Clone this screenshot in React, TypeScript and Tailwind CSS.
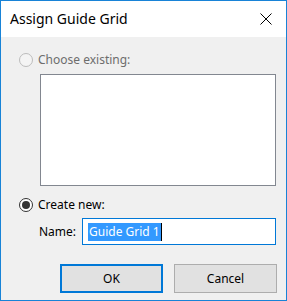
import React from "react";

function Radio({ checked, disabled }: { checked?: boolean; disabled?: boolean }) {
  return (
    <span
      className={`flex h-[14px] w-[14px] shrink-0 items-center justify-center rounded-full border ${
        disabled ? "border-[#bcbcbc] bg-[#f4f4f4]" : "border-[#333333] bg-white"
      }`}
    >
      {checked && <span className="h-[8px] w-[8px] rounded-full bg-[#333333]" />}
    </span>
  );
}

export default function App() {
  return (
    <div
      className="flex h-[301px] w-[287px] flex-col border border-[#1883d7] bg-[#f0f0f0] text-[12px] text-black"
      style={{ fontFamily: '"Noto Sans", "Open Sans", sans-serif' }}
    >
      {/* title bar */}
      <div className="flex h-[36px] shrink-0 items-center justify-between bg-white pl-[9px] pr-[14px]">
        <span className="text-[14px] leading-none text-black">Assign Guide Grid</span>
        <svg width="12" height="12" viewBox="0 0 12 12" className="text-black">
          <path d="M0.5 0.5 L11.5 11.5 M11.5 0.5 L0.5 11.5" stroke="currentColor" strokeWidth="1" fill="none" />
        </svg>
      </div>

      <div className="flex flex-col pl-[18px] pr-[9px]">
        {/* choose existing */}
        <div className="mt-[15px] flex h-[15px] items-center gap-[5px] text-[#6d6d6d]">
          <Radio disabled />
          <span className="leading-none">Choose existing:</span>
        </div>
        <div className="ml-[21px] mt-[7px] h-[112px] w-[236px] border border-[#828790] bg-white" />

        {/* create new */}
        <div className="mt-[11px] flex h-[15px] items-center gap-[5px]">
          <Radio checked />
          <span className="leading-none">Create new:</span>
        </div>
        <div className="mt-[6px] flex items-center">
          <span className="ml-[20px] w-[43px] leading-none">Name:</span>
          <div className="flex h-[27px] w-[194px] items-center border border-[#0078d7] bg-white pl-[5px]">
            <span className="bg-[#3399ff] px-px leading-[18px] text-white">Guide Grid 1</span>
            <span className="h-[18px] w-px bg-black" />
          </div>
        </div>

        {/* buttons */}
        <div className="mt-[19px] flex gap-[11px] pl-[41px]">
          <button className="flex h-[29px] w-[103px] items-center justify-center border-2 border-[#0078d7] bg-[#e1e1e1] leading-none">
            OK
          </button>
          <button className="flex h-[29px] w-[103px] items-center justify-center border border-[#adadad] bg-[#e1e1e1] leading-none">
            Cancel
          </button>
        </div>
      </div>
    </div>
  );
}
